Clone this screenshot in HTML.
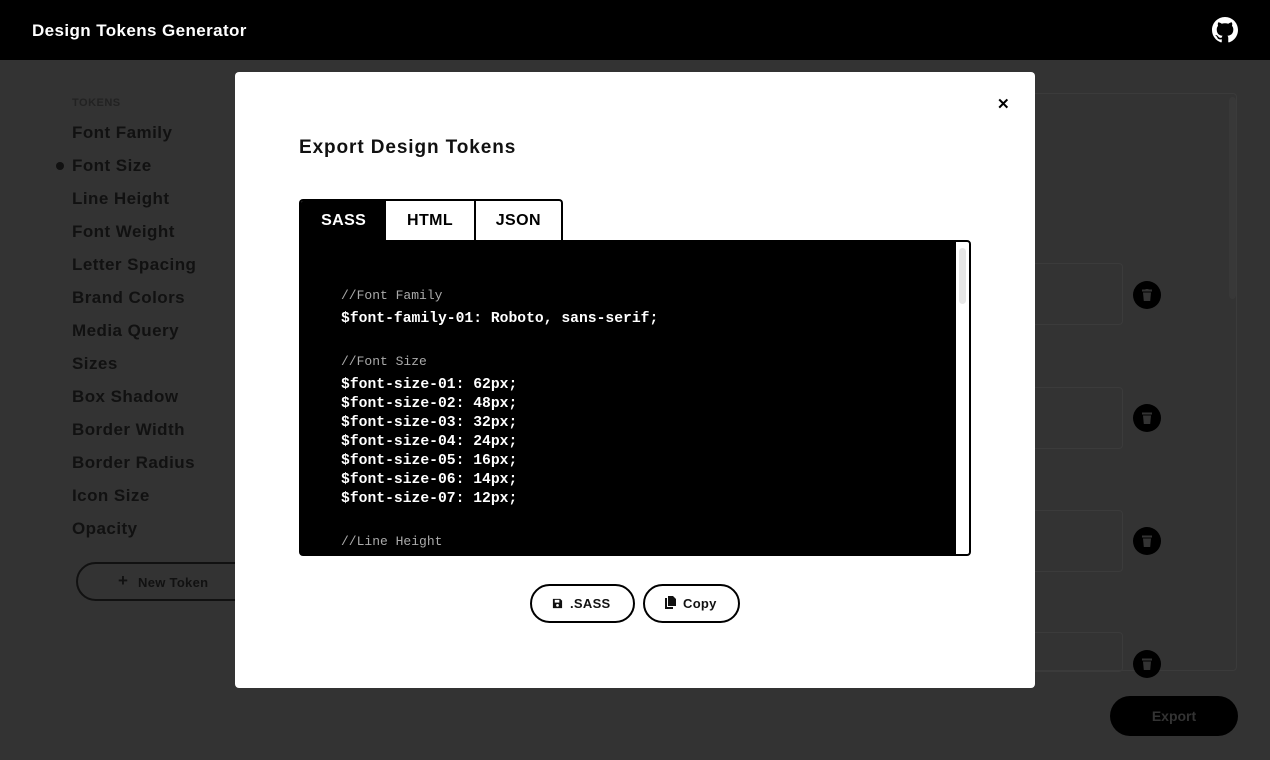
<!DOCTYPE html>
<html><head><style>
*{margin:0;padding:0;box-sizing:border-box}
body{width:1270px;height:760px;overflow:hidden;background:#333;font-family:"Liberation Sans",sans-serif;position:relative}
.hdr{position:absolute;left:0;top:0;width:1270px;height:60px;background:#000;color:#fff}
.hdr .t{position:absolute;left:32px;top:21px;font-size:17px;font-weight:bold;letter-spacing:.4px}
.side{position:absolute;left:72px;top:0}
.side .lab{position:absolute;top:97px;font-size:11px;font-weight:bold;color:#222;letter-spacing:.5px}
.side .it{position:absolute;font-size:17px;font-weight:bold;color:#111;white-space:nowrap;letter-spacing:.45px}
.dot{position:absolute;left:56px;top:162px;width:8px;height:8px;border-radius:50%;background:#111}
.newtok{position:absolute;left:76px;top:562px;width:200px;height:39px;border:2px solid #111;border-radius:20px;font-size:13px;font-weight:bold;color:#111;padding:11px 0 0 40px;letter-spacing:.3px}
.card{position:absolute;left:880px;top:93px;width:357px;height:578px;border:1px solid #3b3b3b;border-radius:4px}
.row{position:absolute;left:880px;width:243px;height:62px;border:1px solid #3b3b3b;border-radius:4px;border-left:none}
.trash{position:absolute;left:1133px;width:28px;height:28px;border-radius:50%;background:#000}
.trash svg{position:absolute;left:9px;top:8px}
.sb{position:absolute;left:1229px;top:97px;width:7px;height:202px;background:#383838;border-radius:4px}
.export{position:absolute;left:1110px;top:696px;width:128px;height:40px;border-radius:20px;background:#000;color:#333;font-size:14px;font-weight:bold;text-align:center;line-height:40px}
.modal{position:absolute;left:235px;top:72px;width:800px;height:616px;background:#fff;border-radius:4px}
.x{position:absolute;left:762px;top:23px;font-size:15px;font-weight:bold}
.title{position:absolute;left:64px;top:65px;font-size:19px;font-weight:bold;color:#111;letter-spacing:.9px}
.tabs{position:absolute;left:64px;top:127px;height:42px;width:264px;border:2px solid #000;border-bottom:none;border-radius:4px 4px 0 0;overflow:hidden;display:flex}
.tab{height:40px;font-size:16px;font-weight:bold;text-align:center;line-height:40px;color:#000;letter-spacing:.4px}
.code{position:absolute;left:64px;top:168px;width:672px;height:316px;background:#000;border:2px solid #000;border-radius:0 4px 4px 4px;overflow:hidden}
.track{position:absolute;right:0;top:0;width:13px;height:100%;background:#fff}
.thumb{position:absolute;right:3px;top:6px;width:7px;height:56px;background:#e6e6e6;border-radius:4px}
.ln{position:absolute;left:40px;font-family:"Liberation Mono",monospace;font-size:14.7px;line-height:19px;color:#fff;white-space:pre;font-weight:bold}
.cm{font-size:13px;color:#aaa;font-weight:normal}
.btn{position:absolute;top:512px;height:39px;border:2px solid #000;border-radius:20px;font-size:13px;font-weight:bold;color:#111;line-height:35px;letter-spacing:.3px}
</style></head><body>
<div class="hdr"><div class="t">Design Tokens Generator</div>
<svg style="position:absolute;left:1212px;top:17px" width="26" height="26" viewBox="0 0 16 16"><path fill="#fff" d="M8 0C3.58 0 0 3.58 0 8c0 3.540 2.29 6.53 5.47 7.59.4.07.55-.17.55-.38 0-.19-.01-.82-.01-1.490-2.01.37-2.53-.49-2.690-.94-.09-.23-.48-.94-.82-1.130-.28-.15-.68-.52-.01-.53.63-.01 1.080.58 1.230.82.72 1.210 1.870.87 2.330.66.07-.52.28-.87.51-1.070-1.780-.2-3.640-.89-3.640-3.950 0-.87.31-1.590.82-2.150-.08-.2-.36-1.020.08-2.120 0 0 .67-.21 2.2.82.64-.18 1.320-.27 2-.27.68 0 1.360.09 2 .27 1.530-1.040 2.2-.82 2.2-.82.44 1.1.16 1.920.08 2.120.51.56.82 1.270.82 2.150 0 3.070-1.870 3.750-3.650 3.950.29.25.54.73.54 1.480 0 1.070-.01 1.930-.01 2.2 0 .21.15.46.55.38A8.013 8.013 0 0016 8c0-4.420-3.580-8-8-8z"/></svg>
</div>
<div class="dot"></div>
<div class="side">
<div class="lab">TOKENS</div>
<div class="it" style="top:123px">Font Family</div>
<div class="it" style="top:156px">Font Size</div>
<div class="it" style="top:189px">Line Height</div>
<div class="it" style="top:222px">Font Weight</div>
<div class="it" style="top:255px">Letter Spacing</div>
<div class="it" style="top:288px">Brand Colors</div>
<div class="it" style="top:321px">Media Query</div>
<div class="it" style="top:354px">Sizes</div>
<div class="it" style="top:387px">Box Shadow</div>
<div class="it" style="top:420px">Border Width</div>
<div class="it" style="top:453px">Border Radius</div>
<div class="it" style="top:486px">Icon Size</div>
<div class="it" style="top:519px">Opacity</div>
</div>
<div class="newtok"><span style="font-size:17px;position:absolute;left:40px;top:7px">+</span><span style="margin-left:20px">New Token</span></div>
<div class="card"></div><div class="sb"></div>
<div class="row" style="top:263px"></div><div class="row" style="top:387px"></div><div class="row" style="top:510px"></div><div class="row" style="top:632px;height:40px"></div>
<div class="trash" style="top:281px"><svg width="10" height="12" viewBox="0 0 10 12"><rect x="0" y="0.5" width="10" height="2" fill="#333"/><rect x="3.5" y="0" width="3" height="1" fill="#333"/><path d="M1 3.5h8l-.8 8.5H1.8z" fill="#333"/></svg></div>
<div class="trash" style="top:404px"><svg width="10" height="12" viewBox="0 0 10 12"><rect x="0" y="0.5" width="10" height="2" fill="#333"/><path d="M1 3.5h8l-.8 8.5H1.8z" fill="#333"/></svg></div>
<div class="trash" style="top:527px"><svg width="10" height="12" viewBox="0 0 10 12"><rect x="0" y="0.5" width="10" height="2" fill="#333"/><path d="M1 3.5h8l-.8 8.5H1.8z" fill="#333"/></svg></div>
<div class="trash" style="top:650px"><svg width="10" height="12" viewBox="0 0 10 12"><rect x="0" y="0.5" width="10" height="2" fill="#333"/><path d="M1 3.5h8l-.8 8.5H1.8z" fill="#333"/></svg></div>
<div class="export">Export</div>
<div class="modal">
<div class="x">✕</div>
<div class="title">Export Design Tokens</div>
<div class="tabs"><div class="tab" style="width:86px;background:#000;color:#fff">SASS</div><div class="tab" style="width:90px;border-right:2px solid #000;border-left:0">HTML</div><div class="tab" style="width:86px">JSON</div></div>
<div class="code">
<div class="ln cm" style="top:44px">//Font Family</div>
<div class="ln" style="top:68px">$font-family-01: Roboto, sans-serif;</div>
<div class="ln cm" style="top:110px">//Font Size</div>
<div class="ln" style="top:134px">$font-size-01: 62px;
$font-size-02: 48px;
$font-size-03: 32px;
$font-size-04: 24px;
$font-size-05: 16px;
$font-size-06: 14px;
$font-size-07: 12px;</div>
<div class="ln cm" style="top:290px">//Line Height</div>
<div class="track"><div class="thumb"></div></div>
</div>
<div class="btn" style="left:295px;width:105px;padding-left:20px"><svg width="11" height="11" viewBox="0 0 12 12" style="vertical-align:-1px;margin-right:7px"><path d="M1 1h8l2 2v8H1z" fill="#111"/><rect x="3" y="2" width="5" height="3" fill="#fff"/><circle cx="6" cy="8" r="1.5" fill="#fff"/></svg>.SASS</div>
<div class="btn" style="left:408px;width:97px;padding-left:20px"><svg width="11" height="13" viewBox="0 0 11 13" style="vertical-align:-1px;margin-right:7px"><path d="M0 2h2v9h6v2H0z" fill="#111"/><path d="M3 0h5l3 3v7H3z" fill="#111"/></svg>Copy</div>
</div>
</body></html>
